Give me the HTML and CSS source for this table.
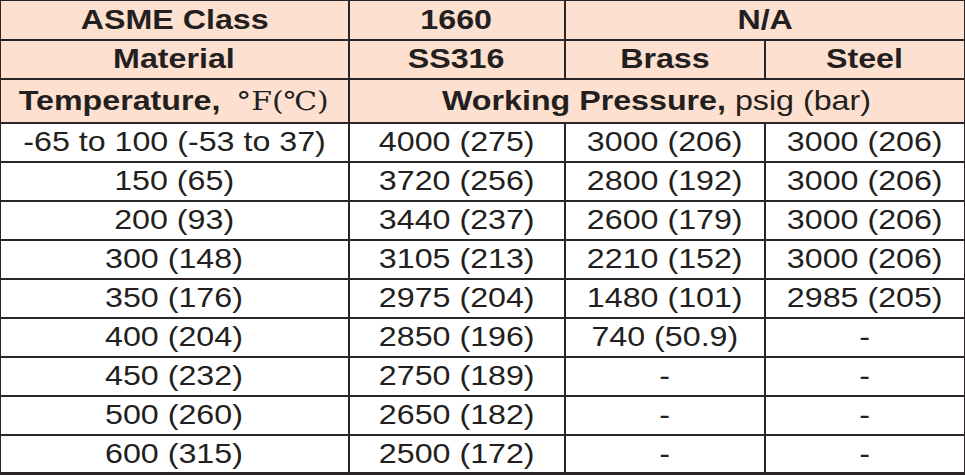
FILE: index.html
```html
<!DOCTYPE html>
<html>
<head>
<meta charset="utf-8">
<link rel="stylesheet" href="styles.css">
</head>
<body>
<table class="rating">
  <colgroup>
    <col class="c1"><col class="c2"><col class="c3"><col class="c4">
  </colgroup>
  <thead>
    <tr class="h1">
      <th><span class="t">ASME Class</span></th>
      <th><span class="t">1660</span></th>
      <th colspan="2"><span class="t">N/A</span></th>
    </tr>
    <tr class="h2">
      <th><span class="t">Material</span></th>
      <th><span class="t">SS316</span></th>
      <th><span class="t">Brass</span></th>
      <th><span class="t">Steel</span></th>
    </tr>
    <tr class="h3">
      <th><span class="t">Temperature, <span class="unit">°F(℃)</span></span></th>
      <th colspan="3"><span class="t">Working Pressure, <span class="norm">psig (bar)</span></span></th>
    </tr>
  </thead>
  <tbody>
    <tr><td><span class="t">-65 to 100 (-53 to 37)</span></td><td><span class="t">4000 (275)</span></td><td><span class="t">3000 (206)</span></td><td><span class="t">3000 (206)</span></td></tr>
    <tr><td><span class="t">150 (65)</span></td><td><span class="t">3720 (256)</span></td><td><span class="t">2800 (192)</span></td><td><span class="t">3000 (206)</span></td></tr>
    <tr><td><span class="t">200 (93)</span></td><td><span class="t">3440 (237)</span></td><td><span class="t">2600 (179)</span></td><td><span class="t">3000 (206)</span></td></tr>
    <tr><td><span class="t">300 (148)</span></td><td><span class="t">3105 (213)</span></td><td><span class="t">2210 (152)</span></td><td><span class="t">3000 (206)</span></td></tr>
    <tr><td><span class="t">350 (176)</span></td><td><span class="t">2975 (204)</span></td><td><span class="t">1480 (101)</span></td><td><span class="t">2985 (205)</span></td></tr>
    <tr><td><span class="t">400 (204)</span></td><td><span class="t">2850 (196)</span></td><td><span class="t">740 (50.9)</span></td><td><span class="t">-</span></td></tr>
    <tr><td><span class="t">450 (232)</span></td><td><span class="t">2750 (189)</span></td><td><span class="t">-</span></td><td><span class="t">-</span></td></tr>
    <tr><td><span class="t">500 (260)</span></td><td><span class="t">2650 (182)</span></td><td><span class="t">-</span></td><td><span class="t">-</span></td></tr>
    <tr><td><span class="t">600 (315)</span></td><td><span class="t">2500 (172)</span></td><td><span class="t">-</span></td><td><span class="t">-</span></td></tr>
  </tbody>
</table>
</body>
</html>
```
FILE: styles.css
```css
html, body {
  margin: 0;
  padding: 0;
  background: #ffffff;
}
.rating {
  border-collapse: collapse;
  table-layout: fixed;
  width: 965px;
  font-family: "Liberation Sans", Arial, sans-serif;
  font-size: 28px;
  color: #231f20;
}
.c1 { width: 348px; }
.c2 { width: 216px; }
.c3 { width: 200px; }
.c4 { width: 201px; }
.rating th,
.rating td {
  border: 2px solid #2a2627;
  padding: 0;
  text-align: center;
  vertical-align: middle;
  line-height: 30px;
  white-space: nowrap;
}
.rating th {
  background: #fde0cf;
  font-weight: bold;
}
.rating tr > :first-child { border-left-width: 1px; }
.rating tr > :last-child { border-right-width: 3px; }
.rating thead tr:first-child th { border-top-width: 1px; }
.rating tbody tr:last-child td { border-bottom-width: 3px; }
.h1, .h2 { height: 39px; }
.h3 { height: 44px; }
.rating tbody tr { height: 39px; }
.t {
  display: inline-block;
  transform: scaleX(1.15);
  transform-origin: center;
}
.unit {
  font-family: "DejaVu Serif", "Liberation Serif", serif;
  font-weight: normal;
  font-size: 26px;
  padding-left: 6px;
}
.norm {
  font-weight: normal;
}
```
